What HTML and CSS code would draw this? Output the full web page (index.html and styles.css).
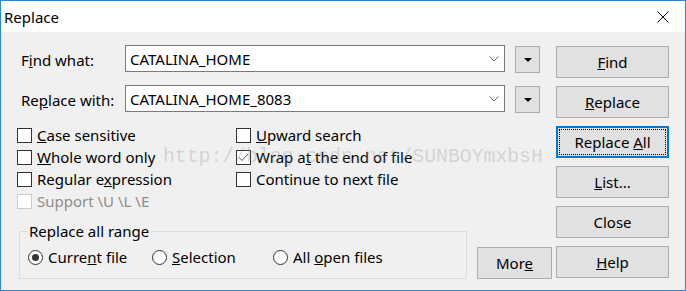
FILE: index.html
```html
<!DOCTYPE html>
<html lang="en">
<head>
    <meta charset="UTF-8">
    <title>Replace</title>
    <link rel="stylesheet" href="styles.css">
</head>
<body>
    <div class="window">
        <div class="titlebar">
            <span class="title">Replace</span>
            <svg class="close" width="12" height="12" viewBox="0 0 12 12">
                <path d="M0.5 0.5 L11.5 11.5 M11.5 0.5 L0.5 11.5" stroke="#000" stroke-width="1" fill="none"/>
            </svg>
        </div>

        <div class="dialog">
            <div class="main">
                <div class="field-row">
                    <label class="field-label">F<u>i</u>nd what:</label>
                    <div class="combo">
                        <span class="combo-text">CATALINA_HOME</span>
                        <svg class="chevron" width="10" height="6" viewBox="0 0 10 6">
                            <path d="M0.5 0.5 L5 5 L9.5 0.5" stroke="#6d6d6d" fill="none"/>
                        </svg>
                    </div>
                    <button class="drop-btn"><span class="tri"></span></button>
                </div>
                <div class="field-row">
                    <label class="field-label">Re<u>p</u>lace with:</label>
                    <div class="combo">
                        <span class="combo-text">CATALINA_HOME_8083</span>
                        <svg class="chevron" width="10" height="6" viewBox="0 0 10 6">
                            <path d="M0.5 0.5 L5 5 L9.5 0.5" stroke="#6d6d6d" fill="none"/>
                        </svg>
                    </div>
                    <button class="drop-btn"><span class="tri"></span></button>
                </div>

                <div class="options">
                    <div class="opt-col first">
                        <div class="check"><span class="box"></span><span><u>C</u>ase sensitive</span></div>
                        <div class="check"><span class="box"></span><span><u>W</u>hole word only</span></div>
                        <div class="check"><span class="box"></span><span>Regular e<u>x</u>pression</span></div>
                        <div class="check disabled"><span class="box"></span><span>Support \U \L \E</span></div>
                    </div>
                    <div class="opt-col">
                        <div class="check"><span class="box"></span><span><u>U</u>pward search</span></div>
                        <div class="check"><span class="box checked">
                            <svg width="13" height="13" viewBox="0 0 13 13">
                                <path d="M2 6.5 L5 9.5 L11 3" stroke="#555" stroke-width="1" fill="none"/>
                            </svg>
                        </span><span>Wrap a<u>t</u> the end of file</span></div>
                        <div class="check"><span class="box"></span><span>Continue to next file</span></div>
                    </div>
                </div>

                <div class="bottom-row">
                    <div class="group">
                        <span class="legend">Replace all range</span>
                        <div class="radio wide"><span class="dot on"></span><span>Curre<u>n</u>t file</span></div>
                        <div class="radio wide2"><span class="dot"></span><span><u>S</u>election</span></div>
                        <div class="radio"><span class="dot"></span><span>All <u>o</u>pen files</span></div>
                    </div>
                    <button class="btn btn-more">Mor<u>e</u></button>
                </div>
            </div>

            <div class="side">
                <button class="btn"><u>F</u>ind</button>
                <button class="btn"><u>R</u>eplace</button>
                <button class="btn default">Replace <u>A</u>ll</button>
                <button class="btn"><u>L</u>ist...</button>
                <button class="btn">Close</button>
                <button class="btn"><u>H</u>elp</button>
            </div>
        </div>

        <div class="watermark">http://blog.csdn.net/SUNBOYmxbsH</div>
    </div>
</body>
</html>
```

FILE: styles.css
```css
body {
    margin: 0;
    font-family: "Noto Sans", "Open Sans", sans-serif;
    font-size: 15px;
    color: #000;
    background: #fff;
}

.window {
    position: relative;
    width: 686px;
    height: 291px;
    box-sizing: border-box;
    border: 1px solid #2b87d6;
    background: #f0f0f0;
    display: flex;
    flex-direction: column;
    overflow: hidden;
}

.titlebar {
    height: 31px;
    flex: none;
    background: #fff;
    display: flex;
    align-items: center;
    justify-content: space-between;
    padding: 0 16px 0 3px;
}

.title {
    font-size: 15px;
    line-height: 20px;
}

.close {
    display: block;
}

.dialog {
    flex: 1;
    display: flex;
    gap: 4px;
    padding: 13px 16px 11px 16px;
}

.main {
    flex: 1;
    display: flex;
    flex-direction: column;
}

.field-row {
    display: flex;
    align-items: flex-start;
    height: 27px;
}

.field-row + .field-row {
    margin-top: 13px;
}

.field-label {
    flex: none;
    width: 108px;
    box-sizing: border-box;
    padding: 3px 0 0 4px;
    line-height: 24px;
}

.combo {
    flex: none;
    width: 380px;
    height: 27px;
    box-sizing: border-box;
    border: 1px solid #7a7a7a;
    background: #fff;
    display: flex;
    align-items: center;
    padding: 0 5px 0 4px;
}

.combo-text {
    line-height: 22px;
}

.chevron {
    margin-left: auto;
    display: block;
}

.drop-btn {
    flex: none;
    margin: 1px 0 0 10px;
    width: 25px;
    height: 27px;
    box-sizing: border-box;
    border: 1px solid #adadad;
    background: #e1e1e1;
    padding: 0;
    display: flex;
    align-items: center;
    justify-content: center;
}

.tri {
    width: 0;
    height: 0;
    border-left: 4px solid transparent;
    border-right: 4px solid transparent;
    border-top: 4px solid #000;
}

.options {
    display: flex;
    margin-top: 12px;
}

.opt-col.first {
    width: 219px;
}

.check {
    height: 22px;
    display: flex;
    align-items: center;
    gap: 5px;
    line-height: 20px;
}

.box {
    width: 15px;
    height: 15px;
    box-sizing: border-box;
    border: 1px solid #333;
    background: #fff;
    display: flex;
    align-items: center;
    justify-content: center;
}

.box svg {
    display: block;
}

.check.disabled {
    color: #8d8d8d;
}

.check.disabled .box {
    border-color: #cccccc;
}

.bottom-row {
    margin-top: auto;
    display: flex;
    align-items: flex-end;
}

.group {
    position: relative;
    flex: none;
    margin-left: 2px;
    width: 448px;
    height: 48px;
    box-sizing: border-box;
    border: 1px solid #dcdcdc;
    display: flex;
    align-items: center;
    padding: 4px 0 0 8px;
}

.legend {
    position: absolute;
    left: 7px;
    top: -11px;
    padding: 0 2px;
    background: #f0f0f0;
    line-height: 20px;
}

.radio {
    display: flex;
    align-items: center;
    gap: 5px;
    line-height: 20px;
}

.radio.wide {
    width: 124px;
}

.radio.wide2 {
    width: 121px;
}

.dot {
    width: 15px;
    height: 15px;
    box-sizing: border-box;
    border: 1px solid #333;
    border-radius: 50%;
    background: #fff;
    display: flex;
    align-items: center;
    justify-content: center;
}

.dot.on::after {
    content: "";
    width: 7px;
    height: 7px;
    border-radius: 50%;
    background: #333;
}

.btn {
    flex: none;
    height: 32px;
    box-sizing: border-box;
    border: 1px solid #adadad;
    background: #e1e1e1;
    font-family: inherit;
    font-size: 15px;
    color: #000;
    padding: 0;
}

.btn-more {
    margin-left: 10px;
    width: 75px;
}

.side {
    flex: none;
    width: 113px;
    display: flex;
    flex-direction: column;
    gap: 8px;
    padding-top: 1px;
}

.btn.default {
    border-color: #0078d7;
    box-shadow: inset 0 0 0 1px #0078d7;
    outline: 1px dotted #000;
    outline-offset: -4px;
}

.watermark {
    position: absolute;
    left: 162px;
    top: 144px;
    font-family: "Liberation Mono", monospace;
    font-size: 19.8px;
    line-height: 24px;
    color: rgba(140, 140, 140, 0.3);
    pointer-events: none;
}
```
